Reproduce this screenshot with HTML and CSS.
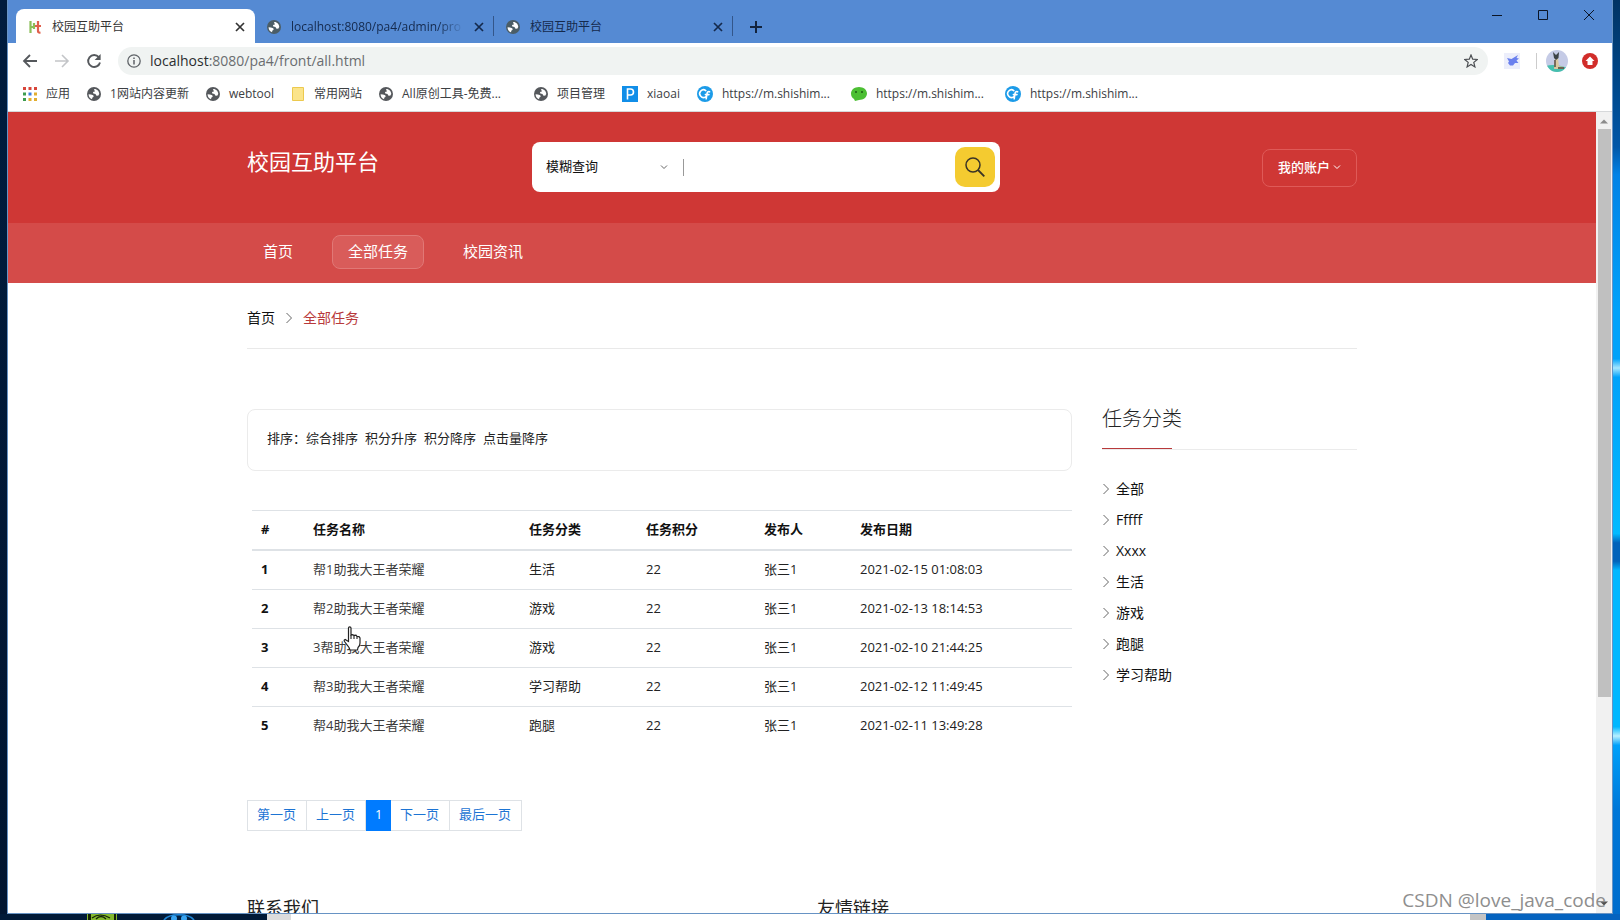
FILE: index.html
```html
<!DOCTYPE html>
<html lang="zh-CN">
<head>
<meta charset="utf-8">
<title>校园互助平台</title>
<link rel="stylesheet" href="styles.css">
</head>
<body>
<svg class="defs" aria-hidden="true">
  <symbol id="globe" viewBox="0 0 16 16">
    <circle cx="8" cy="8" r="8" fill="currentColor"/>
    <path class="land" d="M1.800 8.200 4.500 8.600 7.200 9.400 7.600 11 6 12.200 5.800 14C3.400 13.200 1.800 11 1.800 8.200ZM8 2.200C11.500 2 14 4.800 14 8L12.800 10 10.400 9.800 9.800 8 7.200 7.400 6.800 5.800 9 5.200Z"/>
  </symbol>
  <symbol id="close" viewBox="0 0 10 10"><path d="M1 1 9 9M9 1 1 9" stroke="currentColor" stroke-width="1.700" fill="none"/></symbol>
  <symbol id="right" viewBox="0 0 8 10"><path d="M1.500 0 6.500 5 1.500 10" stroke="currentColor" fill="none"/></symbol>
  <symbol id="down" viewBox="0 0 8 6"><path d="M1 1.500 4 4.500 7 1.500" stroke="currentColor" fill="none"/></symbol>
  <symbol id="cbadge" viewBox="0 0 16 16">
    <circle cx="8" cy="8" r="8" fill="#1c9be8"/>
    <path d="M8.800 4.600A3.800 3.800 0 1 0 8.600 10.800M12.600 5.800C11 5.200 10.200 6 10 7.600L9.200 12.800M8.400 8.600H12" stroke="#fff" stroke-width="1.600" fill="none" stroke-linecap="round"/>
  </symbol>
</svg>
<div class="desktop">
  <div class="browser">
    <div class="tabstrip">
      <div class="tab tab-active">
        <svg class="icon14" viewBox="0 0 14 14" fill="none" stroke-width="2.200"><path d="M2.500 1V13M2.500 7H7M6 3V9" stroke="#8bbf5a"/><path d="M10 1V11Q10 13 12.500 12.500M7 6H13" stroke="#e0604c"/></svg>
        <span class="tab-title">校园互助平台</span>
        <button class="tab-close" aria-label="关闭"><svg class="icon10"><use href="#close"/></svg></button>
      </div>
      <div class="tab">
        <svg class="icon14 globe-dim"><use href="#globe"/></svg>
        <span class="tab-title tab-fade">localhost:8080/pa4/admin/pro</span>
        <button class="tab-close" aria-label="关闭"><svg class="icon10"><use href="#close"/></svg></button>
      </div>
      <div class="tab">
        <svg class="icon14 globe-dim"><use href="#globe"/></svg>
        <span class="tab-title">校园互助平台</span>
        <button class="tab-close" aria-label="关闭"><svg class="icon10"><use href="#close"/></svg></button>
      </div>
      <button class="new-tab" aria-label="新标签页"><svg class="icon14" viewBox="0 0 14 14"><path d="M7 1V13M1 7H13" stroke="#12233d" stroke-width="2"/></svg></button>
      <div class="window-controls">
        <button aria-label="最小化"><svg class="icon12" viewBox="0 0 12 12"><path d="M1 6.500H11" stroke="#0b1526"/></svg></button>
        <button aria-label="最大化"><svg class="icon12" viewBox="0 0 12 12"><path d="M1.500 1.500H10.500V10.500H1.500Z" stroke="#0b1526" fill="none"/></svg></button>
        <button aria-label="关闭窗口"><svg class="icon12" viewBox="0 0 12 12"><path d="M1 1 11 11M11 1 1 11" stroke="#0b1526"/></svg></button>
      </div>
    </div>

    <div class="toolbar">
      <button class="tool" aria-label="后退"><svg class="icon16" viewBox="0 0 16 16"><path d="M15 8H2M8 2 2 8 8 14" stroke="#55585c" stroke-width="1.800" fill="none"/></svg></button>
      <button class="tool" aria-label="前进"><svg class="icon16" viewBox="0 0 16 16"><path d="M1 8H14M8 2 14 8 8 14" stroke="#c3c5c8" stroke-width="1.600" fill="none"/></svg></button>
      <button class="tool" aria-label="刷新"><svg class="icon16" viewBox="0 0 16 16"><path d="M12.800 4.200A6 6 0 1 0 14 9.500" stroke="#55585c" stroke-width="1.900" fill="none"/><path d="M14.600 1V7H8.600Z" fill="#55585c"/></svg></button>
      <div class="omnibox">
        <svg class="icon14" viewBox="0 0 14 14"><circle cx="7" cy="7" r="6.200" fill="none" stroke="#5f6368" stroke-width="1.300"/><path d="M7 6V10.500M7 3.400V5" stroke="#5f6368" stroke-width="1.500"/></svg>
        <span class="url"><span class="host">localhost</span>:8080/pa4/front/all.html</span>
        <button class="star" aria-label="收藏"><svg class="icon14" viewBox="0 0 14 14"><path d="M7 1 8.700 5.200 13.300 5.500 9.800 8.400 10.900 12.900 7 10.400 3.100 12.900 4.200 8.400 .7 5.500 5.300 5.200Z" stroke="#4b4e52" stroke-width="1.200" fill="none"/></svg></button>
      </div>
      <svg class="icon16" viewBox="0 0 16 16"><rect width="16" height="16" fill="#eceefb"/><path d="M3 5 7.500 6 14 2 12.500 5 15 5.500 12.500 7.500 14.500 10 11 10 9 12.500 6 12.500 4 10 5 8.500Z" fill="#6a80ee"/></svg>
      <div class="profile">
        <svg class="avatar" viewBox="0 0 22 22"><clipPath id="av"><circle cx="11" cy="11" r="11"/></clipPath><g clip-path="url(#av)"><path d="M0 0H22V22H0Z" fill="#c5cbe6"/><path d="M0 16Q8 13 22 18V22H0Z" fill="#45bfae"/><path d="M9 8H12L13 16 18 17 17 19H8Z" fill="#d8c7a0"/><path d="M7 2 10 5 13 2 12.500 8 10 10 8 8Z" fill="#3c4347"/><path d="M9 10V17M12 18H18" stroke="#50443a" stroke-width="1.400"/></g></svg>
        <svg class="icon16" viewBox="0 0 16 16"><circle cx="8" cy="8" r="8" fill="#d12d2a"/><path d="M8 3.500 12.500 8H10.500V12H5.500V8H3.500Z" fill="#fff"/></svg>
      </div>
    </div>

    <nav class="bookmarks" aria-label="书签">
      <a href="#"><svg class="icon14" viewBox="0 0 14 14"><path d="M0 0H3V3H0ZM5.500 0H8.500V3H5.500ZM11 0H14V3H11Z" fill="#d8453a"/><path d="M0 5.500H3V8.500H0ZM0 11H3V14H0Z" fill="#3d9c4f"/><path d="M5.500 5.500H8.500V8.500H5.500Z" fill="#3b7de0"/><path d="M11 5.500H14V8.500H11ZM5.500 11H8.500V14H5.500ZM11 11H14V14H11Z" fill="#e2ae2f"/></svg>应用</a>
      <a href="#"><svg class="icon14"><use href="#globe"/></svg>1网站内容更新</a>
      <a href="#"><svg class="icon14"><use href="#globe"/></svg>webtool</a>
      <a href="#"><svg class="icon14" viewBox="0 0 14 14"><path d="M1.500.5H12.500V13.500H1.500Z" fill="#fbe48a" stroke="#ecc94e"/></svg>常用网站</a>
      <a href="#" class="bookmark-long"><svg class="icon14"><use href="#globe"/></svg>All原创工具-免费...</a>
      <a href="#"><svg class="icon14"><use href="#globe"/></svg>项目管理</a>
      <a href="#"><svg class="icon16" viewBox="0 0 16 16"><path d="M0 0H16V16H0Z" fill="#118ee8"/><path d="M5.500 13.500V3H8.500A2.900 2.900 0 0 1 8.500 9H5.500" stroke="#fff" stroke-width="1.600" fill="none"/></svg>xiaoai</a>
      <a href="#" class="bookmark-site"><svg class="icon16"><use href="#cbadge"/></svg>https://m.shishim...</a>
      <a href="#" class="bookmark-site"><svg class="icon16" viewBox="0 0 16 16"><path d="M8 1C12.500 1 16 3.800 16 7.500S12.500 14 8 14L4 15 3 13C1 11.800 0 9.800 0 7.500 0 3.800 3.500 1 8 1Z" fill="#4cbf33"/><circle cx="5" cy="6" r="1" fill="#1d5c15"/><circle cx="11" cy="6" r="1" fill="#1d5c15"/></svg>https://m.shishim...</a>
      <a href="#" class="bookmark-site"><svg class="icon16"><use href="#cbadge"/></svg>https://m.shishim...</a>
    </nav>

    <div class="viewport">
      <div class="page">
        <header class="site-header">
          <div class="container header-row">
            <a class="logo" href="#">校园互助平台</a>
            <form class="search">
              <select class="search-type" aria-label="查询方式"><option>模糊查询</option></select>
              <svg class="search-arrow"><use href="#down"/></svg>
              <input class="search-input" type="text" aria-label="关键字">
              <button class="search-button" type="button" aria-label="搜索"><svg class="icon20" viewBox="0 0 20 20"><circle cx="8" cy="8" r="7" fill="none" stroke="#3a3426" stroke-width="1.500"/><path d="M13 13 19.300 19.300" stroke="#3a3426" stroke-width="1.800"/></svg></button>
            </form>
            <button class="account">我的账户<svg class="account-arrow"><use href="#down"/></svg></button>
          </div>
        </header>
        <nav class="site-nav">
          <div class="container nav-row">
            <a href="#">首页</a>
            <a href="#" class="nav-active">全部任务</a>
            <a href="#">校园资讯</a>
          </div>
        </nav>

        <div class="container">
          <div class="breadcrumb"><a href="#">首页</a><svg class="chevron"><use href="#right"/></svg><a href="#" class="crumb-current">全部任务</a></div>
          <div class="columns">
            <main class="main">
              <div class="sort"><div>排序：<a href="#">综合排序</a></div><a href="#">积分升序</a><a href="#">积分降序</a><a href="#">点击量降序</a></div>
              <table class="tasks">
                <colgroup><col class="c-no"><col class="c-name"><col class="c-type"><col class="c-points"><col class="c-user"><col></colgroup>
                <thead><tr><th>#</th><th>任务名称</th><th>任务分类</th><th>任务积分</th><th>发布人</th><th>发布日期</th></tr></thead>
                <tbody>
                  <tr><th>1</th><td><a href="#">帮1助我大王者荣耀</a></td><td>生活</td><td>22</td><td>张三1</td><td>2021-02-15 01:08:03</td></tr>
                  <tr><th>2</th><td><a href="#">帮2助我大王者荣耀</a></td><td>游戏</td><td>22</td><td>张三1</td><td>2021-02-13 18:14:53</td></tr>
                  <tr><th>3</th><td><a href="#">3帮助我大王者荣耀</a></td><td>游戏</td><td>22</td><td>张三1</td><td>2021-02-10 21:44:25</td></tr>
                  <tr><th>4</th><td><a href="#">帮3助我大王者荣耀</a></td><td>学习帮助</td><td>22</td><td>张三1</td><td>2021-02-12 11:49:45</td></tr>
                  <tr><th>5</th><td><a href="#">帮4助我大王者荣耀</a></td><td>跑腿</td><td>22</td><td>张三1</td><td>2021-02-11 13:49:28</td></tr>
                </tbody>
              </table>
              <div class="pagination">
                <a href="#">第一页</a><a href="#">上一页</a><a href="#" class="page-current">1</a><a href="#">下一页</a><a href="#">最后一页</a>
              </div>
            </main>
            <aside class="sidebar">
              <h2>任务分类</h2>
              <ul>
                <li><svg class="chevron"><use href="#right"/></svg><a href="#">全部</a></li>
                <li><svg class="chevron"><use href="#right"/></svg><a href="#">Fffff</a></li>
                <li><svg class="chevron"><use href="#right"/></svg><a href="#">Xxxx</a></li>
                <li><svg class="chevron"><use href="#right"/></svg><a href="#">生活</a></li>
                <li><svg class="chevron"><use href="#right"/></svg><a href="#">游戏</a></li>
                <li><svg class="chevron"><use href="#right"/></svg><a href="#">跑腿</a></li>
                <li><svg class="chevron"><use href="#right"/></svg><a href="#">学习帮助</a></li>
              </ul>
            </aside>
          </div>
          <footer class="footer"><h3>联系我们</h3><h3>友情链接</h3></footer>
        </div>
      </div>
      <div class="scrollbar">
        <svg class="arrow" viewBox="0 0 8 5"><path d="M0 4.500 4 .5 8 4.500Z" fill="#8b8b8b"/></svg>
        <div class="track"><div class="thumb"></div></div>
        <svg class="arrow" viewBox="0 0 8 5"><path d="M0 .5 4 4.500 8 .5Z" fill="#505050"/></svg>
      </div>
    </div>
  </div>
  <div class="taskbar">
    <div class="taskbar-apps">
      <svg class="nvidia" viewBox="0 0 30 6"><path d="M0 0H30V6H0Z" fill="#83b92e"/><path d="M1 0H4V6H1ZM27 0H29V6H27Z" fill="#142208"/><path d="M5 4Q13-2 23 4M9 5Q14 0 19 5" stroke="#142208" stroke-width="1.200" fill="none"/></svg>
      <svg class="orb" viewBox="0 0 32 6"><path d="M0 6Q3 0 12 0H20Q29 0 32 6Z" fill="#05203f"/><path d="M1 6Q5 .8 16 .8T31 6" stroke="#1d86d8" stroke-width="1.600" fill="none"/><circle cx="11" cy="4.500" r="3" fill="#3aa4f0"/><circle cx="21" cy="4.500" r="3" fill="#3aa4f0"/></svg>
    </div>
    <div class="taskbar-light"></div>
    <div class="taskbar-blue"></div>
  </div>
  <svg class="pointer" viewBox="0 0 18 25"><path d="M5.500 2Q5.500.8 6.700.8T8 2V9L9.500 8.600 11 9.400 13 9.200 14 10.400 16 10.600 17 12V17Q17 20 15 21.500L14.500 24H7L6 21.500 1.500 15.500Q.6 13.800 2 13.500L5.500 15.500Z" fill="#fff" stroke="#222" stroke-width="1.200"/><path d="M8 9V13M11 9.500V13M14 10.500V13" stroke="#222" stroke-width="1.100"/></svg>
  <div class="watermark">CSDN @love_java_code</div>
</div>
</body>
</html>
```

FILE: styles.css
```css
* { box-sizing: border-box; }
body {
  margin: 0;
  font: 13px/20px "Open Sans", "Noto Sans CJK SC", sans-serif;
  color: #222;
}
a { color: inherit; text-decoration: none; }
button { padding: 0; border: 0; background: none; font: inherit; color: inherit; display: flex; align-items: center; justify-content: center; }
svg { flex: none; display: block; }
h2, h3, ul { margin: 0; padding: 0; list-style: none; }
.defs { position: absolute; width: 0; height: 0; }
.icon10 { width: 10px; height: 10px; }
.icon12 { width: 12px; height: 12px; }
.icon14 { width: 14px; height: 14px; }
.icon16 { width: 16px; height: 16px; }
.icon20 { width: 20px; height: 20px; }

.desktop {
  position: relative;
  display: flex;
  flex-direction: column;
  height: 100vh;
  overflow: hidden;
  background:
    linear-gradient(#001c3e, #011530) left / 8px 100% no-repeat,
    linear-gradient(#003363 0, #0057a8 16%, #0082e6 19%, #00a2fa 34%, #00a2fa 39%, #a5e6ff 40%, #00a2fa 41%, #00baff 58%, #0062ba 59%, #0062ba 61%, #00b7ff 62%, #00b7ff 79%, #b9f0ff 80%, #00a0fa 81%, #0077d8 88%, #006ccb 100%);
}
.browser {
  flex: 1;
  min-height: 0;
  display: flex;
  flex-direction: column;
  margin: 0 7px;
  border: solid #6793c4;
  border-width: 0 1px 1px;
  background: #fff;
}

/* Tab strip */
.tabstrip { display: flex; align-items: flex-end; height: 43px; padding-left: 8px; background: #558ad3; }
.tab { display: flex; align-items: center; gap: 10px; width: 239px; height: 34px; padding: 1px 10px 0 12px; font-size: 12px; color: #14294c; background: linear-gradient(#33568a, #33568a) right / 1px 20px no-repeat; }
.tab-active { background: #fff; border-radius: 8px 8px 0 0; color: #333; }
.tab-title { flex: 1; overflow: hidden; white-space: nowrap; }
.tab-fade { -webkit-mask-image: linear-gradient(90deg, #000 85%, transparent); mask-image: linear-gradient(90deg, #000 85%, transparent); }
.land { fill: #fff; }
.globe-dim { color: #4b5d66; }
.globe-dim .land { fill: #9db3c4; }
.new-tab { width: 46px; height: 32px; }
.window-controls { display: flex; align-self: flex-start; margin-left: auto; }
.window-controls button { width: 46px; height: 30px; }

/* Address bar */
.toolbar { display: flex; align-items: center; gap: 16px; height: 36px; padding: 0 14px; }
.omnibox { flex: 1; display: flex; align-items: center; gap: 9px; height: 28px; padding: 0 10px 0 9px; border-radius: 14px; background: #f0f3f2; }
.url { flex: 1; font-size: 14px; color: #6a6d70; }
.host { color: #2b2d30; }
.profile { display: flex; align-items: center; gap: 14px; padding-left: 10px; background: linear-gradient(#ccc, #ccc) left / 1px 16px no-repeat; }
.avatar { width: 22px; height: 22px; }

.bookmarks { display: flex; align-items: center; gap: 17px; height: 33px; padding: 0 15px 2px; border-bottom: 1px solid #d6d8da; font-size: 12px; color: #3c4043; white-space: nowrap; }
.bookmarks a { display: flex; align-items: center; gap: 9px; }
.bookmarks .icon14 { color: #55585c; }
.bookmarks .bookmark-long { width: 138px; }
.bookmarks .bookmark-site { width: 137px; }

/* Viewport */
.viewport { flex: 1; min-height: 0; display: flex; }
.page { flex: 1; overflow: hidden; }
.scrollbar { display: flex; flex-direction: column; align-items: center; width: 16px; padding: 7px 0; background: #f1f1f1; }
.arrow { width: 8px; height: 5px; }
.track { flex: 1; width: 13px; padding: 5px 0; }
.thumb { height: 74%; background: #c0c0c0; }
.container { width: 100%; max-width: 1110px; margin: 0 auto; }

.site-header { background: #cf3735; color: #fff; }
.header-row { display: flex; align-items: flex-start; height: 111px; padding-top: 30px; }
.logo { width: 285px; font-size: 22px; line-height: 38px; }
.search { display: flex; align-items: center; width: 468px; height: 50px; padding: 5px 5px 5px 14px; border-radius: 8px; background: #fff; }
.search-type { width: 114px; border: 0; padding: 0 0 2px; appearance: none; background: none; font: inherit; color: #111; }
.search-arrow { width: 8px; height: 6px; color: #666; }
.search-input { flex: 1; min-width: 0; height: 17px; margin-left: 15px; border: 0; border-left: 1px solid #999; padding: 0 10px; font: inherit; outline: 0; }
.search-button { width: 40px; height: 40px; border-radius: 10px; background: #f4cb30; }
.account { gap: 3px; width: 95px; height: 38px; margin: 7px 0 0 auto; padding-bottom: 3px; border: 1px solid #df5a58; border-radius: 8px; font-weight: 500; }
.account-arrow { width: 8px; height: 6px; }
.site-nav { background: #d44b49; color: #fff; }
.nav-row { display: flex; align-items: center; gap: 22px; height: 60px; padding-bottom: 2px; font-size: 15px; }
.nav-row a { height: 34px; padding: 0 16px; border: 1px solid transparent; border-radius: 8px; line-height: 30px; }
.nav-row a:first-child { padding-left: 15px; }
.nav-row .nav-active { padding: 0 15px; background: #d95c5a; border-color: #e17876; }

.breadcrumb { display: flex; align-items: center; gap: 10px; height: 66px; padding-top: 4px; border-bottom: 1px solid #e9e9e9; font-size: 14px; color: #111; }
.breadcrumb .crumb-current { color: #b8393b; }
.chevron { width: 8px; height: 10px; color: #666; }

.columns { display: grid; grid-template-columns: minmax(0, 1fr) 255px; gap: 30px; padding-top: 60px; }
.sort { display: flex; gap: 7px; height: 62px; padding: 18px 19px; border: 1px solid #ebebeb; border-radius: 8px; }
.tasks { width: calc(100% - 5px); margin: 39px 0 0 5px; table-layout: fixed; border-collapse: collapse; }
.tasks th, .tasks td { height: 39px; padding: 8px 9px 10px; border-top: 1px solid #dee2e6; text-align: left; }
.tasks a { color: #3c3c3c; }
.tasks th { color: #111; font-weight: 700; }
.tasks thead th { border-bottom: 2px solid #dee2e6; }
.c-no { width: 52px; }
.c-name { width: 216px; }
.c-type { width: 117px; }
.c-points { width: 118px; }
.c-user { width: 96px; }

.pagination { display: flex; margin-top: 54px; color: #1c74d4; }
.pagination a { height: 31px; padding: 0 10px 0 9px; border: 1px solid #dee2e6; border-left-width: 0; line-height: 27px; }
.pagination a:first-child { border-left-width: 1px; }
.pagination .page-current { width: 25px; padding: 0 9px; background: #007bff; border-color: #007bff; color: #fff; }

.sidebar h2 { height: 41px; border-bottom: 1px solid #ebebeb; background: linear-gradient(#b8393b, #b8393b) left bottom / 70px 1px no-repeat; font-size: 20px; line-height: 20px; font-weight: 300; }
.sidebar ul { padding-top: 23px; font-size: 14px; color: #111; }
.sidebar li { display: flex; align-items: center; gap: 6px; height: 31px; }
.footer { display: grid; grid-template-columns: 570px 1fr; padding-top: 64px; }
.footer h3 { font-size: 18px; line-height: 26px; font-weight: 400; }

/* Taskbar */
.taskbar { display: flex; height: 6px; background: #011a38; }
.taskbar-apps { display: flex; gap: 46px; width: 267px; padding-left: 87px; }
.nvidia { width: 30px; height: 6px; }
.orb { width: 32px; height: 6px; }
.taskbar-light { flex: 1; background: linear-gradient(90deg, #dcdcdc 24px, #fff 24px, #fff calc(100% - 16px), #c4c4c4 calc(100% - 16px)); }
.taskbar-blue { width: 134px; background: #0563bf; }

.pointer { position: absolute; left: 343px; top: 626px; width: 18px; height: 25px; }
.watermark { position: absolute; right: 14px; bottom: 8px; font: 19px/24px "Open Sans", sans-serif; color: #8e8e8e; }
```
